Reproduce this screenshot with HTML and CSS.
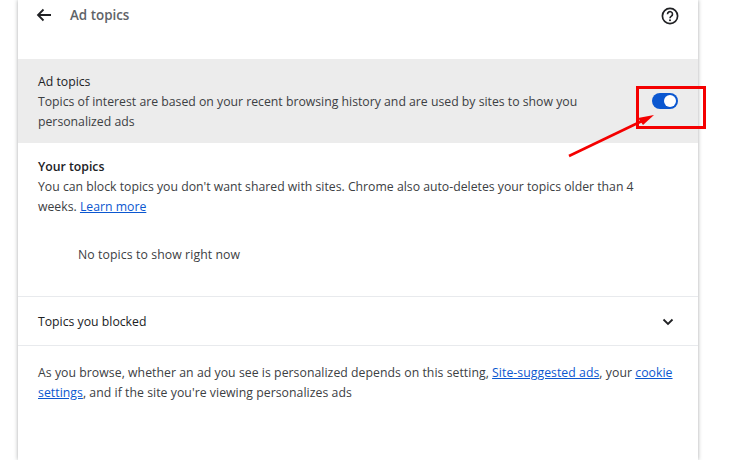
FILE: index.html
```html
<!DOCTYPE html>
<html lang="en">
<head>
<meta charset="utf-8">
<title>Ad topics</title>
<link rel="stylesheet" href="styles.css">
</head>
<body>
<main class="card">
  <header class="header">
    <svg class="back" viewBox="0 0 16 14" width="16" height="14" aria-hidden="true"><path d="M15 7H2M7.500 1.500 2 7l5.500 5.500" fill="none" stroke="#202124" stroke-width="1.800"/></svg>
    <h1 class="title">Ad topics</h1>
    <svg class="help" viewBox="0 0 18 18" width="18" height="18" aria-hidden="true"><circle cx="9" cy="9" r="7.600" fill="none" stroke="#202124" stroke-width="1.700"/><path d="M6.500 7.200a2.500 2.500 0 1 1 3.900 2c-.9.600-1.400 1-1.400 2.100" fill="none" stroke="#202124" stroke-width="1.600"/><circle cx="9" cy="13.200" r="1" fill="#202124"/></svg>
  </header>
  <section class="toggle-row">
    <div class="toggle-text">
      <div class="row-title">Ad topics</div>
      <div class="muted">Topics of interest are based on your recent browsing history and are used by sites to show you personalized ads</div>
    </div>
    <div class="switch"><span class="knob"></span></div>
  </section>
  <section class="topics">
    <h2 class="subhead">Your topics</h2>
    <p class="muted para">You can block topics you don't want shared with sites. Chrome also auto-deletes your topics older than 4 weeks. <a href="#">Learn more</a></p>
    <p class="muted empty">No topics to show right now</p>
  </section>
  <section class="blocked">
    <span class="row-title">Topics you blocked</span>
    <svg class="chev" viewBox="0 0 12 8" width="12" height="8" aria-hidden="true"><path d="M1.500 1.500 6 6l4.500-4.500" fill="none" stroke="#202124" stroke-width="1.800"/></svg>
  </section>
  <p class="muted footer">As you browse, whether an ad you see is personalized depends on this setting, <a href="#">Site-suggested ads</a>, your <a href="#">cookie settings</a>, and if the site you're viewing personalizes ads</p>
</main>
<div class="callout"></div>
<svg class="arrow" viewBox="0 0 100 60" width="100" height="60" aria-hidden="true"><path d="M9 50 82 15" fill="none" stroke="#f40000" stroke-width="2.500"/><path d="M94 9 78 12 83 19Z" fill="#f40000"/></svg>
</body>
</html>
```
FILE: styles.css
```css
* { box-sizing: border-box; }
html, body { margin: 0; height: 460px; overflow: hidden; background: #fff; }
body { position: relative; font-family: "Open Sans", "Noto Sans", sans-serif; font-size: 12.25px; line-height: 20px; color: #3c4043; }
.card { width: 680px; height: 460px; margin-left: 18px; background: #fff; box-shadow: 0 0 4px rgba(60,64,67,.45); display: flex; flex-direction: column; }
.header { height: 59px; flex: none; display: flex; align-items: flex-start; padding: 8px 19px 0 18px; }
.title { margin: -1px 0 0 18px; font-size: 13.4px; line-height: 17px; font-weight: 600; color: #5f6368; flex: 1; }
.help { margin-top: -1px; }
.toggle-row { height: 84px; flex: none; background: #ececec; padding: 13px 20px 0; display: flex; align-items: flex-start; justify-content: space-between; }
.toggle-text { width: 560px; margin-top: 0; }
.row-title { color: #202124; }
.switch { width: 26px; height: 16px; margin-top: 21px; border-radius: 8px; background: #0b57d0; position: relative; }
.knob { position: absolute; right: 2px; top: 2px; width: 12px; height: 12px; border-radius: 50%; background: #fff; }
.topics { padding: 14px 20px 0; height: 154px; flex: none; border-bottom: 1px solid #e8eaed; }
.subhead { margin: 0; font-size: 12.25px; line-height: 20px; font-weight: 600; color: #202124; }
.para { margin: 0; max-width: 620px; }
a { color: #0b57d0; text-decoration: underline; }
.empty { margin: 28px 0 0 40px; letter-spacing: .1px; }
.blocked { height: 49px; flex: none; padding: 2px 24px 0 20px; display: flex; align-items: center; justify-content: space-between; border-bottom: 1px solid #e8eaed; }
.footer { margin: 0; padding: 17px 20px 0; letter-spacing: .045px; }
.callout { position: absolute; left: 636px; top: 86px; width: 70px; height: 43px; border: 3px solid #f40000; }
.arrow { position: absolute; left: 560px; top: 106px; }
```
